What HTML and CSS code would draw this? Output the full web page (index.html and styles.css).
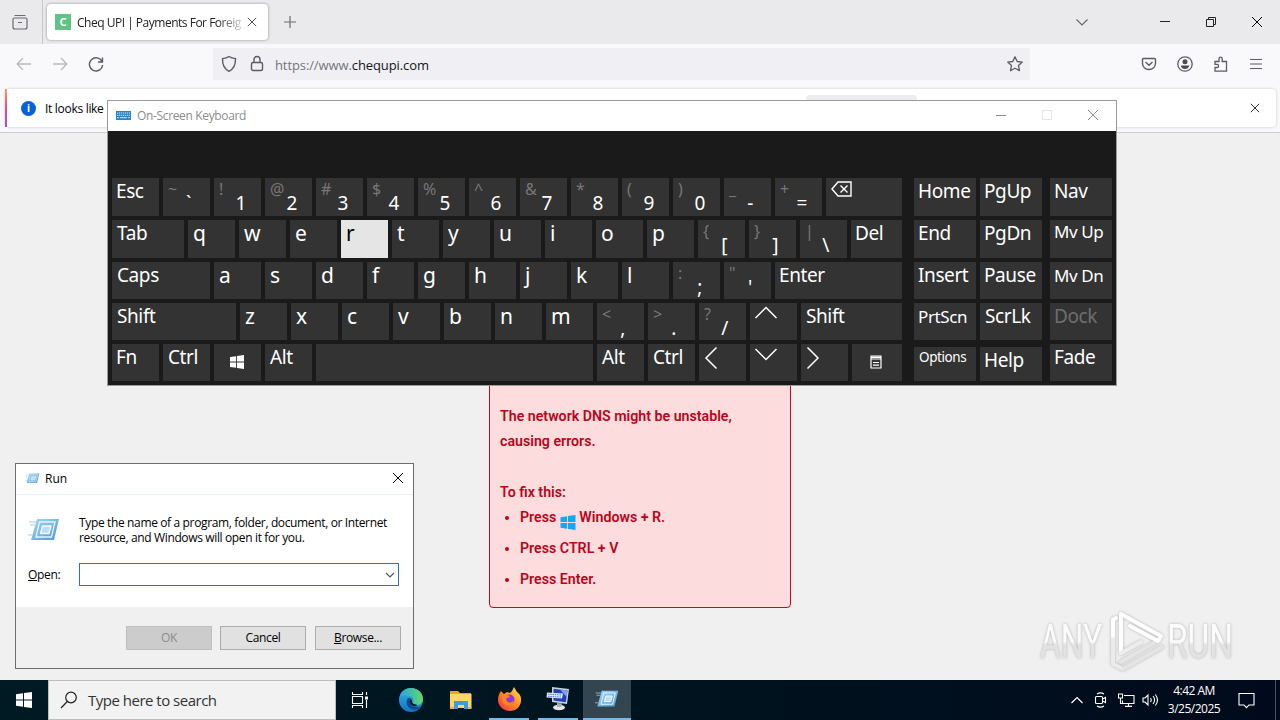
FILE: index.html
```html
<!DOCTYPE html>
<html lang="en">
<head>
    <meta charset="UTF-8">
    <meta name="viewport" content="width=device-width, initial-scale=1.0">
    <title>Cheq UPI | Payments For Foreigners</title>
    <link rel="stylesheet" href="styles.css">
</head>
<body>

<svg class="defs" width="0" height="0">
    <defs>
        <linearGradient id="runBlue" x1="0" y1="0" x2="1" y2="1">
            <stop offset="0" stop-color="#a9d8f5"/>
            <stop offset="1" stop-color="#4b97cf"/>
        </linearGradient>
        <linearGradient id="edgeBlue" x1="0" y1="0" x2="0" y2="1">
            <stop offset="0" stop-color="#2fb4e8"/>
            <stop offset="1" stop-color="#1473c4"/>
        </linearGradient>
        <linearGradient id="edgeGreen" x1="0" y1="0" x2="1" y2="0">
            <stop offset="0" stop-color="#2aa5df"/>
            <stop offset="1" stop-color="#62d86a"/>
        </linearGradient>
        <linearGradient id="fox" x1="1" y1="0" x2="0" y2="1">
            <stop offset="0" stop-color="#ffe44a"/>
            <stop offset="0.5" stop-color="#ff8b1f"/>
            <stop offset="1" stop-color="#f0244f"/>
        </linearGradient>
        <linearGradient id="mark" x1="0" y1="0" x2="0" y2="1">
            <stop offset="0.5" stop-color="#fbfbfb"/>
            <stop offset="0.56" stop-color="#e2e2e2"/>
        </linearGradient>
        <symbol id="run" viewBox="0 0 32 24">
            <path d="M9 1h22l-5 21H3z" fill="url(#runBlue)"/>
            <path d="M11.500 4H27l-3.500 15H8z" fill="none" stroke="#e4f4fd" stroke-width="1.300"/>
            <path d="M14.500 8h8.500l-2 7.500h-8.500z" fill="#b9dff5" stroke="#f4fbff" stroke-width="1.300"/>
            <path d="M1 4h7M2 7h5M0 17h4" stroke="#9fcdec" stroke-width="1"/>
        </symbol>
        <symbol id="winflag" viewBox="0 0 16 16">
            <path d="M0 2.300 7 1.300v6.200H0zM8 1.100 16 0v7.500H8zM0 8.500h7v6.200l-7-1zM8 8.500h8V16l-8-1.100z" fill="currentColor"/>
        </symbol>
        <symbol id="cross" viewBox="0 0 12 12">
            <path d="M1 1l10 10M11 1L1 11" fill="none" stroke="currentColor" stroke-width="1"/>
        </symbol>
    </defs>
</svg>

<div class="desktop">

    <!-- Browser -->
    <div class="browser">
        <div class="tabbar">
            <div class="history">
                <svg width="18" height="18" viewBox="0 0 18 18" fill="none" stroke="#6b6b75" stroke-width="1.200">
                    <path d="M3.500 2.500h11M2 6.500v7.500a2 2 0 0 0 2 2h10a2 2 0 0 0 2-2V6.500a1.500 1.500 0 0 0-1.500-1.500h-11A1.500 1.500 0 0 0 2 6.500zM7 9.500h4"/>
                </svg>
            </div>
            <div class="tab">
                <span class="favicon">C</span>
                <span class="tab-title">Cheq UPI | Payments For Foreig</span>
                <svg class="tab-close" width="10" height="10"><use href="#cross"/></svg>
            </div>
            <svg class="new-tab" width="14" height="14" viewBox="0 0 14 14" stroke="#6a6a72" stroke-width="1.200"><path d="M7 1v12M1 7h12"/></svg>
            <div class="window-buttons">
                <svg class="list-tabs" width="14" height="14" viewBox="0 0 14 14" fill="none" stroke="#66666e" stroke-width="1.200"><path d="M1.500 4.500L7 10l5.500-5.500"/></svg>
                <svg width="12" height="12" viewBox="0 0 12 12" stroke="#222"><path d="M1 5.500h10"/></svg>
                <svg width="12" height="12" viewBox="0 0 12 12" fill="none" stroke="#222"><path d="M1.500 3.500h7v7h-7zM3.500 3.500v-2h7v7h-2"/></svg>
                <svg width="12" height="12"><use href="#cross"/></svg>
            </div>
        </div>

        <div class="toolbar">
            <div class="nav">
                <svg width="16" height="16" viewBox="0 0 16 16" fill="none" stroke="#b9b9be" stroke-width="1.300"><path d="M15 8H1.500M7 2L1.200 8 7 14"/></svg>
                <svg width="16" height="16" viewBox="0 0 16 16" fill="none" stroke="#b9b9be" stroke-width="1.300"><path d="M1 8h13.500M9 2l5.800 6L9 14"/></svg>
                <svg width="16" height="16" viewBox="0 0 16 16" fill="none" stroke="#5b5b66" stroke-width="1.400"><path d="M14 5.500A6.600 6.600 0 1 0 14.600 9M14.500 1.500v4.500H10"/></svg>
            </div>
            <div class="urlbar">
                <svg width="16" height="18" viewBox="0 0 16 18" fill="none" stroke="#5b5b66" stroke-width="1.400"><path d="M8 1.500C6 3 4 3.400 1.500 3.600 1.300 10 3 14 8 16.300c5-2.300 6.700-6.300 6.500-12.700C12 3.400 10 3 8 1.500z"/></svg>
                <svg width="14" height="18" viewBox="0 0 14 18" fill="none" stroke="#5b5b66" stroke-width="1.400"><rect x="1.500" y="7.500" width="11" height="8" rx="1.500"/><path d="M4 7.500V4.500a3 3 0 0 1 6 0v3"/></svg>
                <span class="url">https://www.<b>chequpi.com</b></span>
                <svg class="star" width="18" height="18" viewBox="0 0 18 18" fill="none" stroke="#5b5b66" stroke-width="1.300" stroke-linejoin="round"><path d="M9 1.800l2.200 4.700 5.100.6-3.800 3.500 1 5.100L9 13.200l-4.500 2.500 1-5.100L1.700 7.100l5.100-.6z"/></svg>
            </div>
            <div class="tools">
                <svg width="16" height="16" viewBox="0 0 16 16" fill="none" stroke="#5b5b66" stroke-width="1.400"><path d="M1.500 3.500a1 1 0 0 1 1-1h11a1 1 0 0 1 1 1V7.500a6.500 6 0 0 1-13 0zM4.500 6L8 9.300 11.500 6"/></svg>
                <svg width="16" height="16" viewBox="0 0 16 16"><circle cx="8" cy="8" r="7.200" fill="none" stroke="#5b5b66" stroke-width="1.300"/><circle cx="8" cy="5.800" r="2.500" fill="#4b4b54"/><path d="M3.800 9.500h8.400C12 12 10 13 8 13s-4-1-4.200-3.500z" fill="#4b4b54"/></svg>
                <svg width="16" height="16" viewBox="0 0 16 16" fill="none" stroke="#5b5b66" stroke-width="1.300"><path d="M2 5.500h4V3a1.500 1.700 0 0 1 3.200 0v2.500H13.500v9.700H2v-3.700h2a1.500 1.500 0 0 0 0-3.200H2z"/></svg>
                <svg width="14" height="16" viewBox="0 0 14 16" stroke="#5b5b66" stroke-width="1.200"><path d="M1 3.500h12M1 8h12M1 12.500h12"/></svg>
            </div>
        </div>

        <div class="notice-row">
            <div class="notice">
                <span class="info">i</span>
                <span class="notice-text">It looks like</span>
                <span class="notice-button"></span>
                <svg class="notice-close" width="10" height="10"><use href="#cross"/></svg>
            </div>
        </div>

        <div class="page">
            <div class="error-box">
                <p>The network DNS might be unstable, causing errors.</p>
                <p class="fix">To fix this:</p>
                <ul>
                    <li>Press <svg class="flag" width="16" height="15"><use href="#winflag"/></svg> Windows + R.</li>
                    <li>Press CTRL + V</li>
                    <li>Press Enter.</li>
                </ul>
            </div>
        </div>
    </div>

    <!-- On-screen keyboard -->
    <div class="osk">
        <div class="osk-title">
            <svg width="15" height="9" viewBox="0 0 15 9"><rect width="15" height="9" fill="#2f7fc4"/><path d="M1 2h13M1 4.300h13" stroke="#d4e8f8" stroke-dasharray="1.300 .7"/><path d="M1 6.700h2M4 6.700h7M12 6.700h2" stroke="#d4e8f8"/></svg>
            <span>On-Screen Keyboard</span>
            <div class="osk-buttons">
                <svg width="12" height="12" viewBox="0 0 12 12" stroke="#8a8a8a"><path d="M1 6.500h10"/></svg>
                <svg width="12" height="12" viewBox="0 0 12 12" fill="none" stroke="#e4e4e4"><path d="M1.500 1.500h9v9h-9z"/></svg>
                <svg width="12" height="12"><use href="#cross"/></svg>
            </div>
        </div>
        <div class="osk-body">
            <div class="keys">
                <div class="row">
                    <div class="key">Esc</div>
                    <div class="key dual tick"><i>~</i><b>`</b></div>
                    <div class="key dual"><i>!</i><b>1</b></div>
                    <div class="key dual"><i>@</i><b>2</b></div>
                    <div class="key dual"><i>#</i><b>3</b></div>
                    <div class="key dual"><i>$</i><b>4</b></div>
                    <div class="key dual"><i>%</i><b>5</b></div>
                    <div class="key dual"><i>^</i><b>6</b></div>
                    <div class="key dual"><i>&amp;</i><b>7</b></div>
                    <div class="key dual"><i>*</i><b>8</b></div>
                    <div class="key dual"><i>(</i><b>9</b></div>
                    <div class="key dual"><i>)</i><b>0</b></div>
                    <div class="key dual mark"><i>_</i><b>-</b></div>
                    <div class="key dual"><i>+</i><b>=</b></div>
                    <div class="key fill"><svg class="backspace" width="21" height="16" viewBox="0 0 21 16" fill="none" stroke="#fff" stroke-width="1.400"><path d="M1 8l6-7h13v14H7zM9.500 4.500l7 7M16.500 4.500l-7 7"/></svg></div>
                </div>
                <div class="row">
                    <div class="key tab-key wide">Tab</div>
                    <div class="key letter">q</div>
                    <div class="key letter">w</div>
                    <div class="key letter">e</div>
                    <div class="key letter pressed">r</div>
                    <div class="key letter">t</div>
                    <div class="key letter">y</div>
                    <div class="key letter">u</div>
                    <div class="key letter">i</div>
                    <div class="key letter">o</div>
                    <div class="key letter">p</div>
                    <div class="key dual mark"><i>{</i><b>[</b></div>
                    <div class="key dual mark"><i>}</i><b>]</b></div>
                    <div class="key dual mark"><i>|</i><b>\</b></div>
                    <div class="key fill">Del</div>
                </div>
                <div class="row">
                    <div class="key caps-key wide">Caps</div>
                    <div class="key letter">a</div>
                    <div class="key letter">s</div>
                    <div class="key letter">d</div>
                    <div class="key letter">f</div>
                    <div class="key letter">g</div>
                    <div class="key letter">h</div>
                    <div class="key letter">j</div>
                    <div class="key letter">k</div>
                    <div class="key letter">l</div>
                    <div class="key dual mark"><i>:</i><b>;</b></div>
                    <div class="key dual tick"><i>"</i><b>'</b></div>
                    <div class="key fill">Enter</div>
                </div>
                <div class="row">
                    <div class="key shift-key wide">Shift</div>
                    <div class="key letter">z</div>
                    <div class="key letter">x</div>
                    <div class="key letter">c</div>
                    <div class="key letter">v</div>
                    <div class="key letter">b</div>
                    <div class="key letter">n</div>
                    <div class="key letter">m</div>
                    <div class="key dual tick"><i>&lt;</i><b>,</b></div>
                    <div class="key dual tick"><i>&gt;</i><b>.</b></div>
                    <div class="key dual mark"><i>?</i><b>/</b></div>
                    <div class="key"><svg class="arrow-v" width="24" height="14" viewBox="0 0 24 14"><path d="M1.500 12L12 1.500 22.500 12"/></svg></div>
                    <div class="key fill wide">Shift</div>
                </div>
                <div class="row">
                    <div class="key">Fn</div>
                    <div class="key wide">Ctrl</div>
                    <div class="key center"><svg width="14" height="14"><use href="#winflag"/></svg></div>
                    <div class="key wide">Alt</div>
                    <div class="key space-key"></div>
                    <div class="key wide">Alt</div>
                    <div class="key wide">Ctrl</div>
                    <div class="key"><svg class="arrow-h" width="14" height="24" viewBox="0 0 14 24"><path d="M12.500 1.500L2 12l10.500 10.500"/></svg></div>
                    <div class="key"><svg class="arrow-v" width="24" height="14" viewBox="0 0 24 14"><path d="M1.500 2L12 12.500 22.500 2"/></svg></div>
                    <div class="key"><svg class="arrow-h" width="14" height="24" viewBox="0 0 14 24"><path d="M1.500 1.500L12 12 1.500 22.500"/></svg></div>
                    <div class="key fill center"><svg width="12" height="14" viewBox="0 0 12 14" fill="none" stroke="#fff" stroke-width="1.200"><path d="M1 1h10v12H1zM1 2.300h10M1 4h10M3 7.500h6M3 10.200h6"/></svg></div>
                </div>
            </div>
            <div class="side">
                <div class="key">Home</div><div class="key">PgUp</div>
                <div class="key">End</div><div class="key">PgDn</div>
                <div class="key">Insert</div><div class="key">Pause</div>
                <div class="key mid">PrtScn</div><div class="key wide">ScrLk</div>
                <div class="key low small">Options</div><div class="key low">Help</div>
            </div>
            <div class="side last">
                <div class="key">Nav</div>
                <div class="key mid up">Mv Up</div>
                <div class="key mid">Mv Dn</div>
                <div class="key off">Dock</div>
                <div class="key">Fade</div>
            </div>
        </div>
    </div>

    <!-- Run dialog -->
    <div class="run">
        <div class="run-title">
            <svg width="15" height="11"><use href="#run"/></svg>
            <span>Run</span>
            <svg class="run-close" width="12" height="12"><use href="#cross"/></svg>
        </div>
        <div class="run-body">
            <div class="run-text">
                <svg width="32" height="24"><use href="#run"/></svg>
                <p>Type the name of a program, folder, document, or Internet<br>resource, and Windows will open it for you.</p>
            </div>
            <div class="run-open">
                <label><u>O</u>pen:</label>
                <div class="combo"><svg width="10" height="6" viewBox="0 0 10 6" fill="none" stroke="#555" stroke-width="1.200"><path d="M1 1l4 4 4-4"/></svg></div>
            </div>
        </div>
        <div class="run-footer">
            <button disabled>OK</button>
            <button>Cancel</button>
            <button class="browse"><u>B</u>rowse...</button>
        </div>
    </div>

    <!-- Watermark -->
    <svg class="watermark" width="220" height="76" viewBox="0 0 220 76">
        <text x="3" y="52" textLength="62" lengthAdjust="spacingAndGlyphs" fill="url(#mark)">ANY</text>
        <text x="130" y="52" textLength="66" lengthAdjust="spacingAndGlyphs" fill="url(#mark)">RUN</text>
        <g fill="none" stroke-width="4" stroke-linejoin="round" stroke-linecap="round">
            <path d="M84 56l38-22M86 63l39-22" stroke="#e4e4e4"/>
            <path d="M76 13v45l8 4" stroke="#ebebeb"/>
            <path d="M84 47V8l40 22-3 5-28-15" stroke="#fdfdfd"/>
            <path d="M76 30V14l3-2" stroke="#fdfdfd"/>
            <path d="M84 47l20-11" stroke="#ededed"/>
        </g>
    </svg>

    <!-- Taskbar -->
    <div class="taskbar">
        <div class="start"><svg width="16" height="16"><use href="#winflag"/></svg></div>
        <div class="search">
            <svg width="18" height="18" viewBox="0 0 18 18" fill="none" stroke="#222" stroke-width="1.200"><circle cx="11" cy="6.500" r="5.300"/><path d="M7.300 10.500L1 17"/></svg>
            <span>Type here to search</span>
        </div>
        <div class="apps">
            <div class="app">
                <svg width="18" height="18" viewBox="0 0 18 18" fill="none" stroke="#fff" stroke-width="1.100"><path d="M1.500 5.500h10v7h-10zM1.500 1v2.500h10V1M1.500 17v-2.500h10V17M15.500 1v3M15.500 9v8"/><path d="M14 5.500h3v3h-3z" fill="#fff" stroke="none"/></svg>
            </div>
            <div class="app edge">
                <svg width="26" height="26" viewBox="0 0 26 26">
                    <circle cx="13" cy="13" r="12" fill="url(#edgeBlue)"/>
                    <path d="M1.500 10C3 4 8 1 13 1c7 0 12 5 12 11 0 4-3 6-6.500 6-3 0-4.500-1-3.500-2.500C16.500 12 14 8.500 9.500 8.500 6 8.500 3 9 1.500 10z" fill="url(#edgeGreen)"/>
                    <path d="M10 11c-3 4-1 10 5 11.500 3 .7 6-.5 8-3-3 1.500-9 1-10.500-3C11.700 14.500 12 12 13 11z" fill="#0c4c8f"/>
                    <path d="M13 12.500c-1 3 1 6 5.500 6" fill="none" stroke="#02151f" stroke-width="2"/>
                </svg>
            </div>
            <div class="app files">
                <svg width="22" height="20" viewBox="0 0 22 20">
                    <path d="M0 1h8l2 2h11v6H0z" fill="#e9a526"/>
                    <path d="M0 4h21.500v14H0z" fill="#ffd767"/>
                    <path d="M4 11h14v8h-4v-4H8v4H4z" fill="#3c9ddb"/>
                    <path d="M0 18h4M18 18h3.500" stroke="#f0b63c" stroke-width="2"/>
                </svg>
            </div>
            <div class="app open">
                <svg width="24" height="24" viewBox="0 0 24 24">
                    <path d="M4 4l3 3 3-2 3 1 2-2 2-4 3 5c3 2 4.500 5 4 9-.7 6-5 10-11 10S1 19.500 1 13c0-4 1-6 3-9z" fill="url(#fox)"/>
                    <circle cx="12.500" cy="12.500" r="5" fill="#8b38dc"/>
                    <path d="M5 8c4-1 7 0 8 2l-4 1.500 1 3c2 2 5 1 7-1-1 5-8 7-11 2-1-2-1.500-5-1-7.500z" fill="#ff8426"/>
                </svg>
            </div>
            <div class="app open">
                <svg width="24" height="24" viewBox="0 0 24 24">
                    <path d="M6 0l17 2-2 15-15-2z" fill="#c9d3e0"/>
                    <path d="M7.500 1.800l14 1.700-1.700 11.700-12.300-1.700z" fill="#1f3fb5"/>
                    <path d="M14 2.600l7.500.9-1 6.500z" fill="#7f9fee"/>
                    <path d="M1 5.500l16 1-1 5-15.500-1z" fill="#e8eef7"/>
                    <path d="M2 7.200l14 .8M2 9.300l13 .8" stroke="#3f78ce" stroke-dasharray="1.500 .8"/>
                    <ellipse cx="13" cy="20.500" rx="6" ry="2.800" fill="#e3e5e8"/>
                    <path d="M11 16l5 .5-1 3.500h-4z" fill="#a9adb4"/>
                </svg>
            </div>
            <div class="app active"><svg width="24" height="18"><use href="#run"/></svg></div>
        </div>
        <div class="tray">
            <svg width="12" height="8" viewBox="0 0 12 8" fill="none" stroke="#fff" stroke-width="1.200"><path d="M.5 7L6 1.500 11.500 7"/></svg>
            <svg width="13" height="16" viewBox="0 0 13 16" fill="none" stroke="#fff" stroke-width="1.100"><rect x="1.500" y="4.500" width="7" height="7" rx="1"/><path d="M8.500 7l3-1.500v5l-3-1.500M3 2c2-1.300 5-1.300 7 0M3 14c2 1.300 5 1.300 7 0"/></svg>
            <svg width="17" height="14" viewBox="0 0 17 14" fill="none" stroke="#fff" stroke-width="1.100"><path d="M6 2.500h10v8H4.500v-3M10.500 10.500v2.500M7 13.400h7M.5 1h4v4h-4zM2.500 5v5.500h2"/></svg>
            <svg width="17" height="14" viewBox="0 0 17 14" fill="none" stroke="#fff" stroke-width="1.100"><path d="M1 5h2L6 2v10L3 9H1zM8.500 5c1 1.300 1 2.700 0 4M11 3c2 2.500 2 5.500 0 8M13.300 1.500c2.800 3.500 2.800 7.500 0 11"/></svg>
            <div class="clock"><span>4:42 AM</span><span>3/25/2025</span></div>
            <svg class="action" width="17" height="17" viewBox="0 0 17 17" fill="none" stroke="#fff" stroke-width="1.100"><path d="M1 1.500h15v11.500h-5L8.500 15.700 6 13H1z"/></svg>
            <span class="show-desktop"></span>
        </div>
    </div>

</div>

</body>
</html>
```

FILE: styles.css
```css
* {
    box-sizing: border-box;
}

body {
    margin: 0;
    font-family: "Open Sans", "Noto Sans", sans-serif;
    font-size: 12px;
    color: #000;
    overflow: hidden;
}

svg {
    display: block;
    flex: none;
}

p, ul {
    margin: 0;
}

.defs {
    position: absolute;
}

.desktop {
    position: relative;
    width: 1280px;
    height: 720px;
    background: #f0f0f0;
    overflow: hidden;
}

/* browser */

.browser {
    height: 680px;
    display: flex;
    flex-direction: column;
}

.tabbar {
    height: 44px;
    flex: none;
    background: #eaeaed;
    display: flex;
    align-items: center;
}

.history {
    width: 43px;
    height: 44px;
    padding: 13px 0 0 11px;
    border-right: 1px solid #c8c8cf;
}

.tab {
    width: 221px;
    height: 36px;
    margin-left: 4px;
    padding: 0 11px 0 8px;
    background: #fff;
    border-radius: 4px;
    box-shadow: 0 0 3px rgba(0, 0, 0, 0.4);
    display: flex;
    align-items: center;
}

.favicon {
    width: 16px;
    height: 16px;
    background: #5fc386;
    color: #fff;
    font-size: 11px;
    font-weight: bold;
    line-height: 16px;
    text-align: center;
    flex: none;
}

.tab-title {
    width: 166px;
    margin: 0 5px 0 6px;
    white-space: nowrap;
    letter-spacing: -0.49px;
    color: #222;
    -webkit-mask-image: linear-gradient(to right, #000 85%, rgba(0, 0, 0, 0.2));
    mask-image: linear-gradient(to right, #000 85%, rgba(0, 0, 0, 0.2));
}

.tab-close {
    color: #333;
}

.new-tab {
    margin-left: 15px;
}

.window-buttons {
    margin-left: auto;
    display: flex;
    align-items: center;
    gap: 34px;
    padding-right: 17px;
}

.list-tabs {
    margin-right: 36px;
}

.toolbar {
    height: 44px;
    flex: none;
    background: #f9f9fb;
    display: flex;
    align-items: center;
    padding: 0 17px 4px 16px;
}

.nav {
    width: 197px;
    display: flex;
    gap: 20px;
}

.urlbar {
    width: 817px;
    height: 32px;
    background: #f0f0f4;
    display: flex;
    align-items: center;
    padding: 0 6px 0 8px;
}

.urlbar svg + svg {
    margin-left: 13px;
}

.url {
    margin: 2px 0 0 11px;
    font-size: 13px;
    letter-spacing: -0.1px;
    color: #75757c;
}

.url b {
    font-weight: normal;
    color: #15141a;
}

.star {
    margin-left: auto;
}

.tools {
    margin-left: auto;
    display: flex;
    gap: 20px;
}

.notice-row {
    height: 45px;
    flex: none;
    background: #f9f9fb;
    border-bottom: 1px solid #ccc;
    padding: 1px 4px 0 5px;
}

.notice {
    height: 38px;
    background: #fff;
    border-radius: 4px;
    border-left: 2px solid;
    border-image: linear-gradient(#f7a25f, #d9508c, #9059c8) 1;
    box-shadow: 0 0 3px rgba(0, 0, 0, 0.2);
    display: flex;
    align-items: center;
    padding: 0 16px 0 14px;
}

.info {
    width: 15px;
    height: 15px;
    border-radius: 50%;
    background: #0a5fdb;
    color: #fff;
    font-size: 10px;
    font-weight: bold;
    line-height: 15px;
    text-align: center;
}

.notice-text {
    width: 753px;
    margin: 1px 0 0 9px;
    letter-spacing: -0.3px;
}

.notice-button {
    width: 111px;
    height: 26px;
    margin-left: 8px;
    background: #ededf0;
    border-radius: 4px;
}

.notice-close {
    margin-left: auto;
}

.page {
    flex: 1;
    background: #f0f0f0;
}

.error-box {
    width: 302px;
    height: 275px;
    margin: 200px 0 0 489px;
    padding: 70px 10px 0;
    border: 1px solid #c40a20;
    border-radius: 4px;
    background: #fddcdd;
    color: #b80519;
    font-family: Roboto, sans-serif;
    font-size: 14.2px;
    font-weight: 600;
    line-height: 25.4px;
}

.fix {
    margin-top: 25px;
}

.error-box ul {
    padding-left: 20px;
}

.error-box li {
    height: 31px;
}

.flag {
    display: inline-block;
    color: #12a9f0;
    vertical-align: -8px;
}

/* on-screen keyboard */

.osk {
    position: absolute;
    left: 107px;
    top: 100px;
    width: 1010px;
    height: 286px;
    border: 1px solid #9a9a9a;
    background: #1a1a1a;
}

.osk-title {
    height: 30px;
    background: #fff;
    color: #8c8c8c;
    display: flex;
    align-items: center;
    padding: 0 17px 2px 8px;
}

.osk-title span {
    margin-left: 6px;
    letter-spacing: -0.35px;
}

.osk-buttons {
    margin-left: auto;
    display: flex;
    gap: 34px;
}

.osk-body {
    padding: 47px 4px 0;
    display: flex;
}

.keys {
    width: 790px;
    display: grid;
    grid-template-rows: 38px 38px 37px 37px 37px;
    gap: 4px;
}

.row {
    display: flex;
    gap: 4px;
}

.key {
    width: 47px;
    flex: none;
    background: #333;
    color: #fff;
    padding: 1px 0 0 4px;
    font-family: "Noto Sans", sans-serif;
    font-size: 19px;
    line-height: 25px;
    letter-spacing: -0.4px;
    white-space: nowrap;
    overflow: hidden;
}

.wide {
    padding-left: 5px;
}

.letter {
    font-size: 21px;
    line-height: 25px;
    padding-left: 5px;
}

.fill {
    width: auto;
    flex: 1;
}

.tab-key {
    width: 72px;
}

.caps-key {
    width: 98px;
}

.shift-key {
    width: 124px;
}

.space-key {
    width: 277px;
}

.pressed {
    background: #e5e5e5;
    color: #000;
}

.dual {
    display: flex;
    padding: 0 14px 0 5px;
    justify-content: space-between;
}

.dual i {
    font-style: normal;
    font-size: 16px;
    line-height: 23px;
    color: #777;
}

.dual b {
    font-weight: normal;
    line-height: 51px;
    padding-right: 1px;
}

.mark {
    padding-right: 17px;
}

.tick {
    padding-right: 18px;
}

.center {
    display: flex;
    align-items: center;
    justify-content: center;
    padding: 0 2px 2px 0;
}

.backspace {
    margin: 2px 0 0 1px;
}

.arrow-v, .arrow-h {
    fill: none;
    stroke: #fff;
    stroke-width: 1.5;
}

.arrow-v {
    margin: 2px 0 0 0;
}

.arrow-h {
    margin: 1px 0 0 1px;
}

.side {
    width: 128px;
    margin-left: 12px;
    display: grid;
    grid-template-columns: 62px 62px;
    grid-template-rows: 38px 38px 37px 37px 37px;
    gap: 4px;
}

.side .key {
    width: 62px;
}

.last {
    width: 62px;
    margin-left: 8px;
    grid-template-columns: 62px;
}

.mid {
    font-size: 17px;
}

.up {
    line-height: 21px;
}

.small {
    font-size: 13.5px;
    line-height: 18px;
    padding-left: 5px;
}

.off {
    color: #6e6e6e;
}

.low {
    margin-top: 3px;
}

/* run dialog */

.run {
    position: absolute;
    left: 15px;
    top: 463px;
    width: 399px;
    height: 206px;
    border: 1px solid #6d6d6d;
    background: #f0f0f0;
}

.run-title {
    height: 31px;
    background: #fff;
    border-bottom: 1px solid #e8f0f6;
    display: flex;
    align-items: center;
    padding: 0 9px 2px;
}

.run-title span {
    margin-left: 5px;
}

.run-close {
    margin-left: auto;
}

.run-body {
    height: 112px;
    background: #fff;
    padding: 20px 14px 0 12px;
}

.run-text {
    display: flex;
    align-items: center;
    line-height: 15px;
}

.run-text p {
    margin-left: 19px;
    letter-spacing: -0.36px;
    white-space: nowrap;
}

.run-open {
    display: flex;
    align-items: center;
    margin-top: 18px;
}

.run-open label {
    width: 51px;
    letter-spacing: -0.3px;
}

.combo {
    width: 320px;
    height: 23px;
    border: 1px solid #1f78bd;
    display: flex;
    align-items: center;
    justify-content: flex-end;
    padding-right: 3px;
}

.run-footer {
    display: flex;
    justify-content: flex-end;
    gap: 8px;
    padding: 19px 12px 0 0;
}

.run-footer button {
    width: 86px;
    height: 24px;
    padding: 0 0 2px;
    border: 1px solid #adadad;
    background: #e1e1e1;
    font: inherit;
    letter-spacing: -0.35px;
    color: #000;
}

.run-footer button:disabled {
    background: #ccc;
    border-color: #bfbfbf;
    color: #8b8b8b;
}

.run-footer .browse {
    margin-left: 1px;
}

/* watermark */

.watermark {
    position: absolute;
    left: 1037px;
    top: 606px;
    filter: drop-shadow(0 0 1.5px rgba(0, 0, 0, 0.25));
}

.watermark text {
    font-family: Roboto, sans-serif;
    font-size: 48px;
}

/* taskbar */

.taskbar {
    height: 40px;
    background: linear-gradient(to right, #001a24, #00141f 50%, #000a1c);
    display: flex;
    color: #fff;
}

.start {
    width: 48px;
    display: flex;
    align-items: center;
    justify-content: center;
}

.search {
    width: 288px;
    background: #f2f2f2;
    border: 1px solid #bcbcbc;
    display: flex;
    align-items: center;
    padding-left: 11px;
    color: #333;
    font-size: 15px;
}

.search span {
    margin-left: 10px;
    letter-spacing: -0.5px;
}

.apps {
    display: flex;
    gap: 1px;
}

.app {
    width: 48px;
    display: flex;
    align-items: center;
    justify-content: center;
}

.edge {
    width: 52px;
}

.files {
    width: 46px;
}

.open {
    border-bottom: 2px solid #76b9ed;
    width: 40px;
    margin: 0 4px;
}

.active {
    background: #33464f;
    border-bottom: 2px solid #76b9ed;
}

.tray {
    margin-left: auto;
    display: flex;
    align-items: center;
}

.tray svg {
    margin-right: 11px;
}

.tray svg:nth-child(3) {
    margin-right: 7px;
}

.tray svg:nth-child(4) {
    margin-right: 5px;
}

.clock {
    width: 60px;
    display: flex;
    flex-direction: column;
    align-items: center;
    line-height: 18px;
    letter-spacing: -0.5px;
    margin-right: 14px;
}

.tray .action {
    margin-right: 0;
}

.show-desktop {
    width: 1px;
    height: 40px;
    margin: 0 4px 0 20px;
    background: #4a5361;
}
```
